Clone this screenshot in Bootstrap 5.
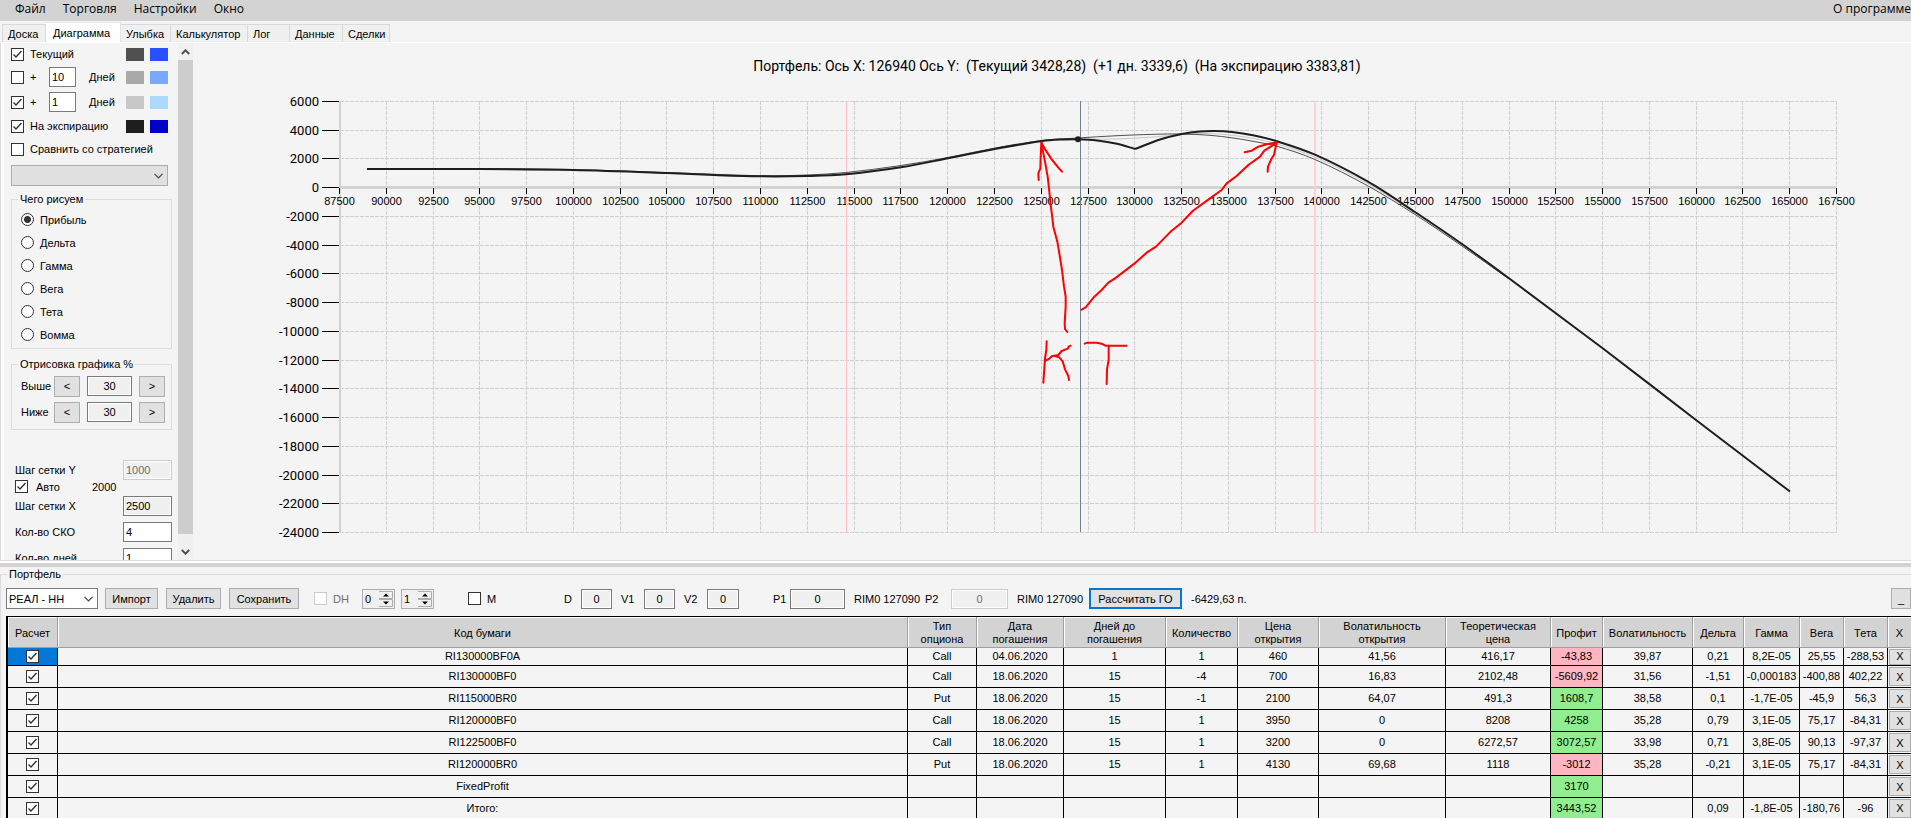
<!DOCTYPE html>
<html lang="ru">
<head>
<meta charset="utf-8">
<meta name="viewport" content="width=device-width, initial-scale=1">
<title>Портфель опционов</title>
<link href="https://cdn.jsdelivr.net/npm/bootstrap@5.3.0/dist/css/bootstrap.min.css" rel="stylesheet">
<style>
  :root {
    --ui: "Liberation Sans", Arial, sans-serif;
    --face: #f4f4f4;
    --edge: #dcdcdc;
    --btn: #e1e1e1;
    --btn-edge: #adadad;
    --tick: url("data:image/svg+xml,%3Csvg xmlns='http://www.w3.org/2000/svg' viewBox='0 0 11 11'%3E%3Cpath d='M1.5 5.5 4 8 9.5 2' fill='none' stroke='%23333' stroke-width='1.4'/%3E%3C/svg%3E");
    --chevron: url("data:image/svg+xml,%3Csvg xmlns='http://www.w3.org/2000/svg' viewBox='0 0 9 6'%3E%3Cpath d='M.5 .8 4.5 4.8 8.5 .8' fill='none' stroke='%23444' stroke-width='1.2'/%3E%3C/svg%3E");
  }
  body { font: 11px/14px var(--ui); color: #000; background: var(--face); height: 100vh; overflow: hidden; }
  label, legend { white-space: nowrap; }

  .menu-bar { background: #d3d3d3; height: 21px; font: 12px/18px "Open Sans", sans-serif; gap: 17px; padding: 0 0 0 15px; }
  .menu-bar a { color: #000; text-decoration: none; }

  .nav-tabs.pages { height: 22px; padding: 1px 0 0 2px; border-bottom: 1px solid #fff; flex-wrap: nowrap; align-items: flex-end; }
  .pages .nav-link { height: 18px; width: 100%; padding: 0 0 0 5px; line-height: 18px; text-align: left; color: #000; background: #f0f0f0; border: 1px solid #d9d9d9; border-left-width: 0; border-bottom: 0; border-radius: 0; margin: 0; }
  .pages .nav-link.active { height: 20px; line-height: 16px; padding-left: 7px; background: #fff; color: #000; border-color: #e4e4e4; }
  .pages li:nth-child(1) { width: 44px; } .pages li:nth-child(2) { width: 75px; }
  .pages li:nth-child(3) { width: 50px; } .pages li:nth-child(4) { width: 77px; }
  .pages li:nth-child(5) { width: 42px; } .pages li:nth-child(6) { width: 53px; }
  .pages li:nth-child(7) { width: 47px; }
  .pages li:nth-child(1) .nav-link { border-left-width: 1px; }

  .top-pane { border-left: 1px solid var(--edge); min-height: 0; }
  .side { width: 177px; padding: 0 5px 0 7px; border-left: 3px solid #fff; overflow: hidden; }
  .side-scroll { width: 15px; margin-right: 1px; background: #f0f0f0; }
  .side-scroll button { height: 17px; border: 0; padding: 0; background: transparent; }
  .scroll-thumb { background: #cdcdcd; margin-bottom: 9px; }

  .form-check-input.tk { width: 13px; height: 13px; margin: 0; border: 1px solid #333; border-radius: 0; background: #fff; flex: none; float: none; }
  .form-check-input.tk:checked { background: #fff var(--tick) center / 11px 11px no-repeat; border-color: #333; }
  .form-check-input.tk:disabled { border-color: #ccc; opacity: 1; }
  .form-check-input.rd { width: 13px; height: 13px; margin: 0; border: 1px solid #333; background: #fff; float: none; flex: none; }
  .form-check-input.rd:checked { background: radial-gradient(circle, #333 0 3px, #fff 4px); border-color: #333; }

  .form-control.box { height: 20px; padding: 0 2px; font: 11px/16px var(--ui); color: #000; border: 1px solid #7a7a7a; border-radius: 0; background: #fff; min-width: 0; flex: none; }
  .form-control.box.ro { background: #f0f0f0; box-shadow: inset 0 0 0 1px #fff; }
  .form-control.box:disabled { border-color: #ccc; color: #6d6d6d; background: #f0f0f0; box-shadow: inset 0 0 0 1px #fff; }
  .form-select.pick { height: 21px; padding: 0 20px 0 2px; font: 11px/18px var(--ui); color: #000; border: 1px solid #7a7a7a; border-radius: 0; background: #fff var(--chevron) right 4px center / 9px 6px no-repeat; flex: none; }
  .form-select.pick.off { width: 157px; background-color: var(--btn); border-color: var(--btn-edge); }
  .btn.key { height: 21px; padding: 0; font: 11px/18px var(--ui); color: #000; background: var(--btn); border: 1px solid var(--btn-edge); border-radius: 0; flex: none; }
  .btn.key.accent { border: 2px solid #0078d7; line-height: 16px; }

  .series { display: grid; grid-template-rows: 22px 24px 26px 22px 24px; width: 157px; }
  .series > div { display: flex; align-items: center; }
  .series label { margin-left: 6px; }
  .plus { width: 13px; }
  .swatch { width: 18px; height: 13px; margin-left: 6px; flex: none; }
  .form-control.w-days { width: 27px; margin: 0 7px 0 6px; }

  fieldset.group { border: 1px solid var(--edge); }
  fieldset.group > legend { float: none; width: auto; font-size: 11px; line-height: 14px; margin: 0 0 0 6px; padding: 0 2px; }
  .what { margin-top: 6px; }
  .radios { display: grid; grid-auto-rows: 23px; padding: 2px 0 2px 9px; }
  .radios label { padding-left: 6px; }
  .side fieldset.group { width: 161px; }
  .range { display: flex; align-items: center; height: 26px; padding-left: 9px; }
  .range:first-of-type { margin-top: 2px; }
  .range label { width: 33px; }
  .range .box { width: 45px; margin: 0 7px; }
  .range .key { width: 26px; }
  .steps { display: grid; grid-template-rows: 20px 13px 26px 26px 26px; width: 161px; padding: 30px 0 0 4px; }
  .steps > div { display: flex; align-items: center; }
  .step { justify-content: space-between; }
  .step .box { width: 49px; }

  .splitter { height: 7px; border-top: 1px solid var(--edge); border-bottom: 4px solid #d3d3d3; background: #fff; }

  .portfolio { border-width: 1px 0 0 1px !important; }
  .tools { height: 35px; padding: 0 0 0 5px; align-items: center; white-space: nowrap; }
  .spin { width: 33px; height: 20px; border: 1px solid var(--btn-edge); padding: 1px; background: #f0f0f0; }
  .spin input { border: 0; padding: 0 1px; width: 15px; background: transparent; font: 11px/14px var(--ui); }
  .spin svg { width: 14px; height: 16px; }

  .grid-wrap { margin-left: 5px; border-top: 1px solid #000; border-left: 2px solid #000; }
  .trades { width: 100%; table-layout: fixed; border-collapse: separate; border-spacing: 0; text-align: center; }
  .trades th { height: 31px; padding: 2px 0 0; font-weight: 400; line-height: 13px; background: #d3d3d3; border-right: 1px solid #a0a0a0; border-bottom: 1px solid #a0a0a0; box-shadow: inset 1px 1px 0 #fff; }
  .trades td { height: 22px; padding: 0; line-height: 13px; border-right: 1px solid #000; border-bottom: 1px solid #000; white-space: nowrap; }
  .trades tbody tr:first-child td { height: 18px; }
  .trades tbody tr:last-child td { height: 20px; border-bottom: 0; }
  .trades .tk { display: block; margin: 0 auto; }
  .trades td:last-child, .trades th:last-child { border-right: 0; }
  .trades td.chosen { background: #0078d7; }
  .trades td.loss { background: #ffb6c1; }
  .trades td.gain { background: #90ee90; }
  .trades .btn.key { display: block; width: calc(100% - 1px); height: 19px; margin: 0 0 0 1px; line-height: 16px; }
  .trades tr:first-child .btn.key { height: 16px; line-height: 13px; }

  .chart { width: 100%; height: 100%; display: block; }
  .chart .grid-line { stroke: #d0d0d0; stroke-dasharray: 4 1; shape-rendering: crispEdges; }
  .chart .axis { stroke: #d3d3d3; shape-rendering: crispEdges; }
  .chart .notch { stroke: #000; shape-rendering: crispEdges; }
  .chart .lab-x { font: 11px "Liberation Sans", sans-serif; text-anchor: middle; }
  .chart .lab-y { font: 13px Roboto, sans-serif; text-anchor: end; }
  .chart .head { font: 14px Roboto, sans-serif; text-anchor: middle; white-space: pre; }
  .chart .ink { fill: none; stroke: #f00; stroke-width: 6; stroke-linejoin: round; stroke-linecap: round; }
  .chart .curve { fill: none; }
</style>
</head>
<body class="d-flex flex-column">

<nav class="menu-bar d-flex flex-shrink-0" aria-label="Главное меню">
  <a href="#">Файл</a><a href="#">Торговля</a><a href="#">Настройки</a><a href="#">Окно</a>
  <a href="#" class="ms-auto">О программе</a>
</nav>

<ul class="nav nav-tabs pages flex-shrink-0">
  <li class="nav-item"><button class="nav-link">Доска</button></li>
  <li class="nav-item"><button class="nav-link active">Диаграмма</button></li>
  <li class="nav-item"><button class="nav-link">Улыбка</button></li>
  <li class="nav-item"><button class="nav-link">Калькулятор</button></li>
  <li class="nav-item"><button class="nav-link">Лог</button></li>
  <li class="nav-item"><button class="nav-link">Данные</button></li>
  <li class="nav-item"><button class="nav-link">Сделки</button></li>
</ul>

<main class="top-pane d-flex flex-grow-1">
  <aside class="side flex-shrink-0">
    <div class="series">
      <div><input class="form-check-input tk" type="checkbox" id="s1" checked><label for="s1">Текущий</label>
        <span class="swatch ms-auto" style="background:#505050"></span><span class="swatch" style="background:#2850ff"></span></div>
      <div><input class="form-check-input tk" type="checkbox" id="s2"><label for="s2" class="plus">+</label>
        <input class="form-control box w-days" id="d2" value="10"><label for="d2">Дней</label>
        <span class="swatch ms-auto" style="background:#a9a9a9"></span><span class="swatch" style="background:#78a8ff"></span></div>
      <div><input class="form-check-input tk" type="checkbox" id="s3" checked><label for="s3" class="plus">+</label>
        <input class="form-control box w-days" id="d3" value="1"><label for="d3">Дней</label>
        <span class="swatch ms-auto" style="background:#c8c8c8"></span><span class="swatch" style="background:#aadaff"></span></div>
      <div><input class="form-check-input tk" type="checkbox" id="s4" checked><label for="s4">На экспирацию</label>
        <span class="swatch ms-auto" style="background:#1e1e1e"></span><span class="swatch" style="background:#0000c8"></span></div>
      <div><input class="form-check-input tk" type="checkbox" id="s5"><label for="s5">Сравнить со стратегией</label></div>
    </div>
    <div class="pt-1"><select class="form-select pick off" aria-label="Стратегия"><option></option></select></div>

    <fieldset class="group what">
      <legend>Чего рисуем</legend>
      <div class="radios">
        <div class="d-flex align-items-center"><input class="form-check-input rd" type="radio" name="g" id="r1" checked><label for="r1">Прибыль</label></div>
        <div class="d-flex align-items-center"><input class="form-check-input rd" type="radio" name="g" id="r2"><label for="r2">Дельта</label></div>
        <div class="d-flex align-items-center"><input class="form-check-input rd" type="radio" name="g" id="r3"><label for="r3">Гамма</label></div>
        <div class="d-flex align-items-center"><input class="form-check-input rd" type="radio" name="g" id="r4"><label for="r4">Вега</label></div>
        <div class="d-flex align-items-center"><input class="form-check-input rd" type="radio" name="g" id="r5"><label for="r5">Тета</label></div>
        <div class="d-flex align-items-center"><input class="form-check-input rd" type="radio" name="g" id="r6"><label for="r6">Вомма</label></div>
      </div>
    </fieldset>

    <fieldset class="group mt-2 pb-1">
      <legend>Отрисовка графика %</legend>
      <div class="range"><label for="up">Выше</label><button class="btn key">&lt;</button><input class="form-control box ro text-center" id="up" value="30"><button class="btn key">&gt;</button></div>
      <div class="range"><label for="dn">Ниже</label><button class="btn key">&lt;</button><input class="form-control box ro text-center" id="dn" value="30"><button class="btn key">&gt;</button></div>
    </fieldset>

    <div class="steps">
      <div class="step"><label for="gy">Шаг сетки Y</label><input class="form-control box" id="gy" value="1000" disabled></div>
      <div><input class="form-check-input tk" type="checkbox" id="au" checked><label class="ps-2" for="au">Авто</label><span class="ps-4 ms-2">2000</span></div>
      <div class="step"><label for="gx">Шаг сетки X</label><input class="form-control box ro" id="gx" value="2500"></div>
      <div class="step"><label for="sko">Кол-во СКО</label><input class="form-control box" id="sko" value="4"></div>
      <div class="step"><label for="days">Кол-во дней</label><input class="form-control box" id="days" value="1"></div>
    </div>
  </aside>

  <div class="side-scroll d-flex flex-column flex-shrink-0">
    <button aria-label="Вверх"><svg width="9" height="6" viewBox="0 0 9 6" class="d-block mx-auto"><path d="M.8 5 4.5 1.3 8.2 5" fill="none" stroke="#505050" stroke-width="2"/></svg></button>
    <div class="scroll-thumb flex-grow-1"></div>
    <button aria-label="Вниз"><svg width="9" height="6" viewBox="0 0 9 6" class="d-block mx-auto"><path d="M.8 1 4.5 4.7 8.2 1" fill="none" stroke="#505050" stroke-width="2"/></svg></button>
  </div>

  <div class="flex-grow-1" style="min-width:0">
    <svg class="chart" viewBox="194 43 1717 517" preserveAspectRatio="xMidYMin meet" role="img" aria-label="Диаграмма портфеля">
      <g id="plot"></g>
      <g id="lines"></g>
      <text class="head" x="1057" y="71">Портфель: Ось X: 126940 Ось Y:  (Текущий 3428,28)  (+1 дн. 3339,6)  (На экспирацию 3383,81)</text>
      <g class="ink" transform="translate(1000 120) scale(.33333)">
        <polyline points="202,636 195,627 194,610 197,560 197,530 192,500 186,450 178,400 172,365 160,320 156,285 152,255 147,205 143,170 136,130 130,100 125,68"/>
        <polyline points="116,180 115,160 121,145 122,110 124,68 138,92 155,118 175,143 186,155"/>
        <polyline points="245,569 257,562 283,530 305,510 325,488 345,475 403,431 440,398 468,380 515,332 545,308 578,273 630,235 665,210 680,190 710,168 745,135 780,110 793,92 830,68"/>
        <polyline points="734,97 755,92 775,80 800,73 830,67 822,105 815,115 804,140 803,155"/>
        <polyline points="140,664 139,690 135,715 130,788"/>
        <polyline points="137,722 148,716 155,709 175,705 185,693 203,686 207,679 212,677"/>
        <polyline points="165,708 178,712 188,724 195,748 205,768 207,780"/>
        <polyline points="254,671 262,668 290,668 305,671 316,677 380,677"/>
        <polyline points="326,677 326,720 321,748 320,792"/>
      </g>
    </svg>
  </div>
</main>

<div class="splitter flex-shrink-0"></div>

<fieldset class="group portfolio flex-shrink-0">
  <legend>Портфель</legend>
  <div class="tools d-flex">
    <select class="form-select pick" style="width:92px" aria-label="Портфель"><option>РЕАЛ - НН</option></select>
    <button class="btn key" style="width:53px;margin-left:7px">Импорт</button>
    <button class="btn key" style="width:55px;margin-left:8px">Удалить</button>
    <button class="btn key" style="width:70px;margin-left:8px">Сохранить</button>
    <input class="form-check-input tk" type="checkbox" id="dh" disabled style="margin-left:15px"><label for="dh" style="width:35px;padding-left:6px;color:#6d6d6d">DH</label>
    <div class="spin d-flex"><input aria-label="DH от" value="0"><svg viewBox="0 0 14 16"><path d="M0 .5h13.500v7H0v1h13.500v7H0" fill="none" stroke="#adadad"/><path d="M4 5.500h6L7 2.500zM4 10.500h6l-3 3z"/></svg></div>
    <div class="spin d-flex" style="margin-left:6px"><input aria-label="DH до" value="1"><svg viewBox="0 0 14 16"><path d="M0 .5h13.500v7H0v1h13.500v7H0" fill="none" stroke="#adadad"/><path d="M4 5.500h6L7 2.500zM4 10.500h6l-3 3z"/></svg></div>
    <input class="form-check-input tk" type="checkbox" id="mm" style="margin-left:34px"><label for="mm" style="width:83px;padding-left:6px">M</label>
    <label for="fd" style="width:17px">D</label><input class="form-control box ro text-center" style="width:31px" id="fd" value="0">
    <label for="fv1" style="width:32px;padding-left:9px">V1</label><input class="form-control box ro text-center" style="width:31px" id="fv1" value="0">
    <label for="fv2" style="width:32px;padding-left:9px">V2</label><input class="form-control box ro text-center" style="width:32px" id="fv2" value="0">
    <label for="fp1" style="width:51px;padding-left:34px">P1</label><input class="form-control box ro text-center" style="width:55px" id="fp1" value="0">
    <span style="width:80px;padding-left:9px">RIM0 127090</span>
    <label for="fp2" style="width:26px">P2</label><input class="form-control box text-center" style="width:57px" id="fp2" value="0" disabled>
    <span style="width:81px;padding-left:9px">RIM0 127090</span>
    <button class="btn key accent" style="width:93px">Рассчитать ГО</button>
    <span style="padding-left:9px">-6429,63 п.</span>
    <button class="btn key ms-auto" style="width:20px">_</button>
  </div>
  <div class="grid-wrap">
    <table class="trades">
      <colgroup id="cols"></colgroup>
      <thead><tr>
        <th>Расчет</th><th>Код бумаги</th><th>Тип<br>опциона</th><th>Дата<br>погашения</th><th>Дней до<br>погашения</th><th>Количество</th><th>Цена<br>открытия</th><th>Волатильность<br>открытия</th><th>Теоретическая<br>цена</th><th>Профит</th><th>Волатильность</th><th>Дельта</th><th>Гамма</th><th>Вега</th><th>Тета</th><th>X</th>
      </tr></thead>
      <tbody id="rows"></tbody>
    </table>
  </div>
</fieldset>

<script src="https://cdn.jsdelivr.net/npm/bootstrap@5.3.0/dist/js/bootstrap.bundle.min.js"></script>
<script>
  // Positions table
  const widths = [50, 0, 69, 87, 102, 72, 81, 127, 105, 52, 90, 51, 56, 44, 44, 23];
  document.getElementById('cols').innerHTML = widths.map(w => w ? `<col style="width:${w}px">` : '<col>').join('');
  const data = [
    ['RI130000BF0A','Call','04.06.2020','1','1','460','41,56','416,17','-43,83','39,87','0,21','8,2E-05','25,55','-288,53'],
    ['RI130000BF0','Call','18.06.2020','15','-4','700','16,83','2102,48','-5609,92','31,56','-1,51','-0,000183','-400,88','402,22'],
    ['RI115000BR0','Put','18.06.2020','15','-1','2100','64,07','491,3','1608,7','38,58','0,1','-1,7E-05','-45,9','56,3'],
    ['RI120000BF0','Call','18.06.2020','15','1','3950','0','8208','4258','35,28','0,79','3,1E-05','75,17','-84,31'],
    ['RI122500BF0','Call','18.06.2020','15','1','3200','0','6272,57','3072,57','33,98','0,71','3,8E-05','90,13','-97,37'],
    ['RI120000BR0','Put','18.06.2020','15','1','4130','69,68','1118','-3012','35,28','-0,21','3,1E-05','75,17','-84,31'],
    ['FixedProfit','','','','','','','','3170','','','','',''],
    ['Итого:','','','','','','','','3443,52','','0,09','-1,8E-05','-180,76','-96']
  ];
  document.getElementById('rows').innerHTML = data.map((r, i) =>
    `<tr><td${i ? '' : ' class="chosen"'}><input class="form-check-input tk" type="checkbox" checked aria-label="${r[0]}"></td>` +
    r.map((v, c) => `<td${c === 8 ? ` class="${v[0] === '-' ? 'loss' : 'gain'}"` : ''}>${v}</td>`).join('') +
    '<td><button class="btn key">X</button></td></tr>').join('');

  // Chart scales
  const px = v => 339.5 + Math.round((v - 87500) * 1497 / 80000);
  const py = v => 101.5 + Math.round((6000 - v) * 431 / 30000);
  const line = (c, x1, y1, x2, y2, extra = '') => `<line class="${c}" x1="${x1}" y1="${y1}" x2="${x2}" y2="${y2}" ${extra}/>`;
  let s = '';
  for (let v = 90000; v <= 167500; v += 2500) s += line('grid-line', px(v), 101, px(v), 532);
  for (let v = 6000; v >= -24000; v -= 2000) {
    if (v) s += line('grid-line', 340, py(v), 1837, py(v));
    s += line('notch', 322, py(v), 339, py(v)) + `<text class="lab-y" x="319" y="${py(v) + 4}">${v}</text>`;
  }
  s += line('axis', 339.5, 101, 339.5, 533, 'stroke-width="2"') + line('axis', 339, 187.5, 1837, 187.5, 'stroke-width="3"');
  for (let v = 87500; v <= 167500; v += 2500)
    s += line('notch', px(v), 188, px(v), 194) + `<text class="lab-x" x="${px(v)}" y="205">${v}</text>`;
  s += line('', 846.5, 101, 846.5, 532, 'stroke="#ffc0cb"') + line('', 1315, 101, 1315, 532, 'stroke="#ffd0d8" stroke-width="2"') + line('', 1080.5, 101, 1080.5, 532, 'stroke="#708090"');
  document.getElementById('plot').innerHTML = s;

  // Smooth path through the given points
  function smooth(p) {
    let d = `M${p[0]}`;
    for (let i = 0; i < p.length - 1; i++) {
      const a = p[i - 1] || p[i], b = p[i], c = p[i + 1], e = p[i + 2] || c, k = c[0] - b[0];
      const m1 = (c[1] - a[1]) / (c[0] - a[0] || 1), m2 = (e[1] - b[1]) / (e[0] - b[0] || 1);
      d += `C${b[0] + k / 3},${b[1] + m1 * k / 3} ${c[0] - k / 3},${c[1] - m2 * k / 3} ${c}`;
    }
    return d;
  }
  const left = [[367,169],[479,169],[573,170],[667,173],[714,175],[760,176.3],[807,176],[846,174.3],[901,167.3],[948,158.3],[995,149],[1042,141],[1062,139.5],[1078,139.3]];
  const tail = [[1462,244],[1509,278.3],[1603,348.5],[1696,420],[1790,491.5]];
  const expiryA = left.concat([[1097,140.4],[1117,143.7],[1135,149]]);
  const expiryB = [[1135,149],[1160,139.5],[1182,134],[1200,131.5],[1215,131],[1232,132],[1253,135.3],[1277,141.3],[1315,154.7],[1368,181.7],[1415,212]].concat(tail);
  const now = [[367,169],[479,168.500],[573,169.500],[667,172.500],[760,175.700],[807,175],[846,172.500],[901,165.500],[948,157.500],[995,148],[1042,140.500],[1078,138],[1117,135.700],[1153,134.300],[1182,134],[1210,135.3],[1233,138],[1253,141.3],[1277,146.3],[1315,159.5],[1368,186],[1415,214.5],[1462,246],[1509,279]];
  const plusDay = [[760,176],[807,175.5],[846,173.5],[901,166.5],[948,158],[1042,141],[1078,139.500],[1117,139],[1153,137],[1182,134.500],[1210,133.500],[1233,135.500],[1253,138.300],[1277,144],[1315,157],[1368,184],[1415,213],[1462,245]];
  const curve = (pts, col, w) => `<path class="curve" d="${smooth(pts)}" stroke="${col}" stroke-width="${w}"/>`;
  document.getElementById('lines').innerHTML =
    curve(plusDay, '#c8c8c8', 1) + curve(now, '#505050', 1) + curve(expiryA, '#1e1e1e', 2) + curve(expiryB, '#1e1e1e', 2) +
    '<circle cx="1078" cy="139.3" r="3" fill="#1e1e1e"/>';
</script>
</body>
</html>
